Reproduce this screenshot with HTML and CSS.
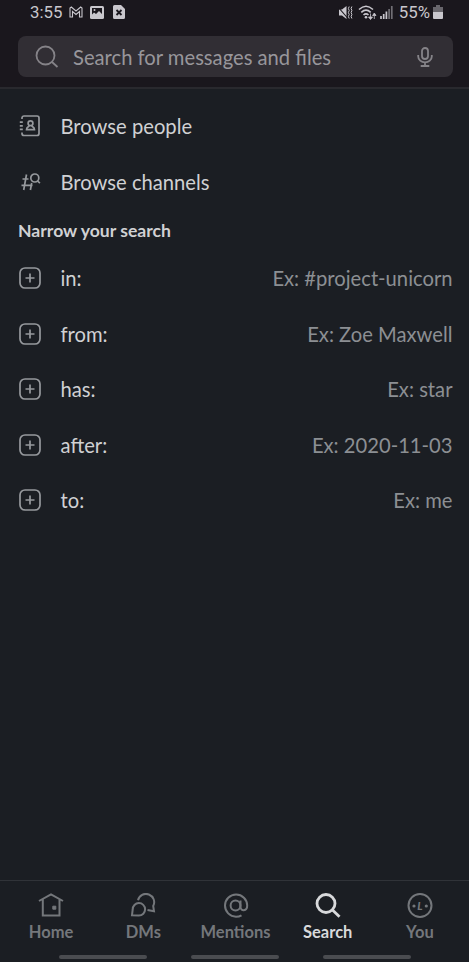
FILE: index.html
```
<!DOCTYPE html>
<html lang="en">
<head>
  <meta charset="UTF-8">
  <meta name="viewport" content="width=device-width, initial-scale=1.0">
  <title>Search</title>
  <link rel="stylesheet" href="styles.css">
</head>
<body>
  <svg class="defs" width="0" height="0">
    <symbol id="plus" viewBox="0 0 22 22">
      <rect x="1" y="1" width="20" height="20" rx="5"/>
      <path d="M11 6.500v9M6.500 11h9"/>
    </symbol>
  </svg>

  <header class="top">
    <div class="status">
      <span class="time">3:55</span>
      <svg class="mail" width="14" height="12" viewBox="0 0 14 12"><path d="M1 11V2l1.300-1L7 5l4.700-4L13 2v9h-2.500V5.500L7 8.500 3.500 5.500V11z"/></svg>
      <svg class="photo" width="14" height="13" viewBox="0 0 14 13"><rect width="14" height="13" rx="1.500" fill="#c9c7cd"/><path d="M2 2h10v6L9 5 6 8 4 6.500 2 8.500z" fill="#1a171d"/><circle cx="4.500" cy="4" r="1" fill="#c9c7cd"/></svg>
      <svg class="file" width="12" height="14" viewBox="0 0 12 14"><path d="M1.500 0H8l4 4v8.500a1.500 1.500 0 0 1-1.500 1.500h-9A1.500 1.500 0 0 1 0 12.500v-11A1.500 1.500 0 0 1 1.500 0z" fill="#c9c7cd"/><path d="M3.500 5l5 5M8.500 5l-5 5" stroke="#1a171d" stroke-width="1.800"/></svg>
      <svg class="mute" width="15" height="15" viewBox="0 0 15 15"><path d="M1 4.500h3L8.500 1v13L4 10.500H1z" fill="#c9c7cd"/><path d="M0 2l10 11.500" stroke="#1a171d" stroke-width="1.100"/><path d="M11.200 1.500l-.8 2 .8 2-.8 2 .8 2-.8 2 .8 2M13.900 1.500l-.8 2 .8 2-.8 2 .8 2-.8 2 .8 2" stroke="#c9c7cd" stroke-width="1" fill="none"/></svg>
      <svg class="wifi" width="19" height="15" viewBox="0 0 19 15"><path d="M1 4.500q7-6.500 14 0M3.300 7.300q4.700-4.300 9.400 0M5.500 10q2.500-2.200 5 0" fill="none" stroke="#c9c7cd" stroke-width="1.600"/><circle cx="8" cy="12.200" r="1.300" fill="#c9c7cd"/><path d="M12.500 8.500v3.500h-2l2 2.500 2-2.500h-2M16.300 14v-3.500h-1.700l1.700-2.500 1.700 2.500h-1.700" fill="#c9c7cd" stroke="#c9c7cd" stroke-width=".8"/></svg>
      <svg class="signal" width="13" height="13" viewBox="0 0 13 13"><path d="M1 10v3M3.700 8v5M6.400 5.500V13" stroke="#c9c7cd" stroke-width="1.700"/><path d="M9.100 3v10M11.800 0v13" stroke="#716f75" stroke-width="1.700"/></svg>
      <span class="percent">55%</span>
      <svg class="battery" width="10" height="14" viewBox="0 0 10 14"><path d="M3 0h4v2h3v5H0V2h3z" fill="#68666c"/><path d="M0 7h10v6a1 1 0 0 1-1 1H1a1 1 0 0 1-1-1z" fill="#c9c7cd"/></svg>
    </div>
    <div class="searchbox">
      <svg width="24" height="24" viewBox="0 0 24 24"><circle cx="10.500" cy="10.500" r="9"/><path d="M17 17l5.500 5"/></svg>
      <span class="placeholder">Search for messages and files</span>
      <svg width="16" height="20" viewBox="0 0 16 20"><rect x="5" y="1" width="6" height="11" rx="3"/><path d="M1.200 8v1.500a6.800 5.800 0 0 0 13.600 0V8M8 15.300V19M3.700 19h8.600"/></svg>
    </div>
  </header>

  <main>
    <div class="row">
      <svg class="icon" width="22" height="22" viewBox="0 0 22 22"><path d="M3 4V3a2 2 0 0 1 2-2h13a2 2 0 0 1 2 2v15.500a2 2 0 0 1-2 2H5a2 2 0 0 1-2-2v-1M.8 7.200h3M.8 10.800h3M.8 14.400h3"/><circle cx="11.500" cy="8.300" r="2.400"/><path d="M10.300 10.500c0 1.500-2.800 1-2.800 4.200h8c0-3.200-2.800-2.700-2.800-4.200"/></svg>
      <span>Browse people</span>
    </div>
    <div class="row">
      <svg class="icon" width="22" height="22" viewBox="0 0 22 22"><path d="M7.500 3.500L4.700 19M12.700 12l-1.300 7M3.500 8h6M2.500 14.300h11"/><circle cx="15.800" cy="7" r="4"/><path d="M18.600 10l2.300 2.200"/></svg>
      <span>Browse channels</span>
    </div>

    <h2>Narrow your search</h2>

    <div class="row"><svg class="icon" width="22" height="22"><use href="#plus"/></svg><span>in:</span><span class="hint">Ex: #project-unicorn</span></div>
    <div class="row"><svg class="icon" width="22" height="22"><use href="#plus"/></svg><span>from:</span><span class="hint">Ex: Zoe Maxwell</span></div>
    <div class="row"><svg class="icon" width="22" height="22"><use href="#plus"/></svg><span>has:</span><span class="hint">Ex: star</span></div>
    <div class="row"><svg class="icon" width="22" height="22"><use href="#plus"/></svg><span>after:</span><span class="hint">Ex: 2020-11-03</span></div>
    <div class="row"><svg class="icon" width="22" height="22"><use href="#plus"/></svg><span>to:</span><span class="hint">Ex: me</span></div>
  </main>

  <footer>
    <nav class="tabs">
      <a class="tab">
        <svg width="26" height="26" viewBox="0 0 26 26"><path d="M1 8L13 1.300 25 8M4.800 6.500v16h16.700v-16"/><path d="M14.800 13.200h3v3h-3z" fill="currentColor" stroke-width="1"/></svg>
        <span>Home</span>
      </a>
      <a class="tab">
        <svg width="26" height="26" viewBox="0 0 26 26"><path d="M2 22.200l.7-5.800a6.200 6.200 0 1 1 6.200 6.100z"/><path d="M8 7.200A8.200 8.200 0 1 1 23.200 13l.8 5.300-6.500-1.300"/></svg>
        <span>DMs</span>
      </a>
      <a class="tab">
        <svg width="26" height="26" viewBox="0 0 26 26"><circle cx="12.500" cy="12.500" r="4.900"/><path d="M17.500 7.500V14c0 4.500 6.700 4.500 6.700-1.500A11.100 11.100 0 1 0 13 23.700c2.200 0 4-.5 5.500-1.400"/></svg>
        <span>Mentions</span>
      </a>
      <a class="tab active">
        <svg width="26" height="26" viewBox="0 0 26 26"><circle cx="11" cy="10.500" r="9"/><path d="M17.500 17l7 6.800"/></svg>
        <span>Search</span>
      </a>
      <a class="tab">
        <svg width="26" height="26" viewBox="0 0 26 26"><circle cx="13" cy="12.500" r="11.500"/><circle cx="7" cy="13" r="1.600" class="dot"/><circle cx="19.300" cy="13" r="1.600" class="dot"/><text x="13" y="16.500" text-anchor="middle">L</text></svg>
        <span>You</span>
      </a>
    </nav>
    <div class="gestures"><i></i><i></i><i></i></div>
  </footer>
</body>
</html>
```
FILE: styles.css
```
* {
  box-sizing: border-box;
}

body {
  margin: 0;
  height: 962px;
  display: flex;
  flex-direction: column;
  overflow: hidden;
  background: #1b1e23;
  color: #d0d1d3;
  font-family: Lato, "Open Sans", sans-serif;
  font-size: 20.2px;
}

.defs {
  position: absolute;
}

svg {
  display: block;
  flex: none;
}

.top {
  height: 89px;
  padding: 0 16px 0 18px;
  background: #1a171d;
  border-bottom: 2px solid #29292e;
}

.status {
  display: flex;
  align-items: center;
  height: 24px;
  margin-bottom: 12px;
  padding: 0 10px 0 12px;
  font: 16.8px/24px Roboto, sans-serif;
  color: #c9c7cd;
}

.mail {
  margin-left: 7px;
  fill: none;
  stroke: #c9c7cd;
  stroke-width: 1.1;
}

.photo {
  margin-left: 7px;
}

.file {
  margin-left: 9px;
}

.mute {
  margin-left: auto;
}

.wifi {
  margin-left: 5px;
}

.signal {
  margin: 0 6px 0 3px;
}

.battery {
  margin-left: 3px;
}

.searchbox {
  display: flex;
  align-items: center;
  height: 41px;
  padding: 0 20px 0 17px;
  border-radius: 8px;
  background: #312e34;
  color: #98969b;
}

.searchbox svg {
  fill: none;
  stroke: #858388;
  stroke-width: 1.8;
}

.placeholder {
  flex: 1;
  margin-left: 14px;
}

main {
  flex: 1;
  padding: 9.5px 16.5px 0 19px;
}

.row {
  display: flex;
  align-items: center;
  height: 55.5px;
  line-height: 24px;
}

.icon {
  margin-right: 19.5px;
  fill: none;
  stroke: #96999d;
  stroke-width: 1.7;
}

.hint {
  margin-left: auto;
  color: #8c8f93;
}

h2 {
  height: 41px;
  margin: 0 0 0 -1px;
  font-size: 17.6px;
  line-height: 41px;
}

footer {
  height: 82px;
  border-top: 1px solid #303338;
}

.tabs {
  display: flex;
  height: 73px;
  padding: 12px 3px 0 5px;
}

.tab {
  flex: 1;
  display: flex;
  flex-direction: column;
  align-items: center;
  color: #74777b;
  font-size: 16.5px;
  font-weight: bold;
  line-height: 26px;
}

.tab svg {
  fill: none;
  stroke: currentColor;
  stroke-width: 2;
}

.tab text {
  fill: currentColor;
  stroke: none;
  font-size: 11px;
  font-style: italic;
  font-weight: 900;
}

.tab .dot {
  fill: currentColor;
  stroke: none;
}

.active {
  color: #d8d9db;
}

.active svg {
  stroke-width: 2.8;
}

.gestures {
  display: flex;
  justify-content: center;
  gap: 44px;
  padding-top: 1px;
}

.gestures i {
  width: 88px;
  height: 4px;
  border-radius: 2px;
  background: #4a4c50;
}
```
